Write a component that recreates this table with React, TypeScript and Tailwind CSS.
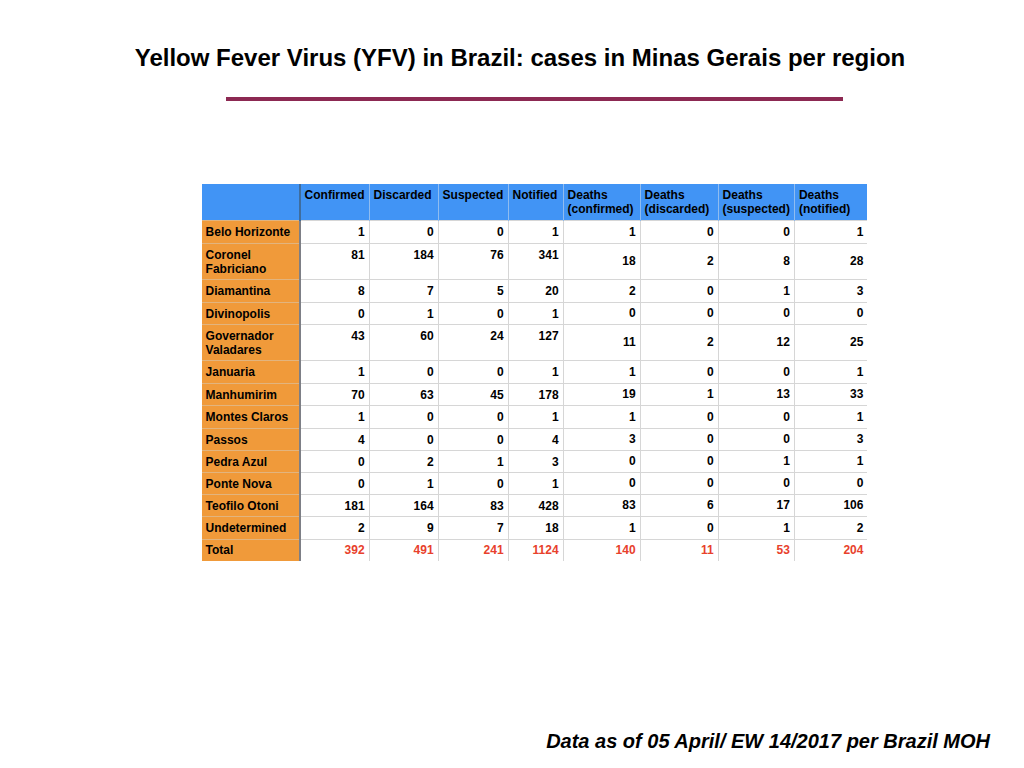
const headers = [
  ['Confirmed'],
  ['Discarded'],
  ['Suspected'],
  ['Notified'],
  ['Deaths', '(confirmed)'],
  ['Deaths', '(discarded)'],
  ['Deaths', '(suspected)'],
  ['Deaths', '(notified)'],
];

const colWidths = [98, 69, 69, 70, 55, 77, 78, 76, 73];

interface Row {
  name: string[];
  values: number[];
  h: string;
}

const rows: Row[] = [
  { name: ['Belo Horizonte'], values: [1, 0, 0, 1, 1, 0, 0, 1], h: 'h-[23px]' },
  { name: ['Coronel', 'Fabriciano'], values: [81, 184, 76, 341, 18, 2, 8, 28], h: 'h-[36px]' },
  { name: ['Diamantina'], values: [8, 7, 5, 20, 2, 0, 1, 3], h: 'h-[23px]' },
  { name: ['Divinopolis'], values: [0, 1, 0, 1, 0, 0, 0, 0], h: 'h-[22px]' },
  { name: ['Governador', 'Valadares'], values: [43, 60, 24, 127, 11, 2, 12, 25], h: 'h-[36px]' },
  { name: ['Januaria'], values: [1, 0, 0, 1, 1, 0, 0, 1], h: 'h-[23px]' },
  { name: ['Manhumirim'], values: [70, 63, 45, 178, 19, 1, 13, 33], h: 'h-[22px]' },
  { name: ['Montes Claros'], values: [1, 0, 0, 1, 1, 0, 0, 1], h: 'h-[23px]' },
  { name: ['Passos'], values: [4, 0, 0, 4, 3, 0, 0, 3], h: 'h-[22px]' },
  { name: ['Pedra Azul'], values: [0, 2, 1, 3, 0, 0, 1, 1], h: 'h-[22px]' },
  { name: ['Ponte Nova'], values: [0, 1, 0, 1, 0, 0, 0, 0], h: 'h-[22px]' },
  { name: ['Teofilo Otoni'], values: [181, 164, 83, 428, 83, 6, 17, 106], h: 'h-[22px]' },
  { name: ['Undetermined'], values: [2, 9, 7, 18, 1, 0, 1, 2], h: 'h-[23px]' },
];

const totals = [392, 491, 241, 1124, 140, 11, 53, 204];

export default function App() {
  return (
    <div
      className="w-[1024px] h-[768px] bg-white flex flex-col items-center text-black"
      style={{ fontFamily: '"Liberation Sans", Arial, sans-serif' }}
    >
      <h1 className="mt-[44px] text-[24px] leading-[28px] font-bold text-center w-full pl-[16px]">
        Yellow Fever Virus (YFV) in Brazil: cases in Minas Gerais per region
      </h1>
      <div className="mt-[25px] w-[617px] h-[4px] bg-[#8c2952] ml-[45px]" />

      <table className="mt-[83px] table-fixed border-collapse text-[12px] leading-[14px] font-bold ml-[45px]">
        <colgroup>
          {colWidths.map((w, i) => (
            <col key={i} style={{ width: w }} />
          ))}
        </colgroup>
        <thead>
          <tr className="h-[36px] bg-[#4194f5]">
            <th className="border-r-2 border-[#3f6d9e]" />
            {headers.map((h, i) => (
              <th
                key={i}
                className="align-top text-left font-bold px-[4px] pt-[4px] border-l border-[#8fbcf0] first:border-l-0"
              >
                {h.map((line, j) => (
                  <div key={j} className="whitespace-nowrap">{line}</div>
                ))}
              </th>
            ))}
          </tr>
        </thead>
        <tbody>
          {rows.map((r) => (
            <tr key={r.name.join(' ')} className={`${r.h} border-t border-[#d6d6d6]`}>
              <td className="bg-[#f09a3a] border-r-2 border-[#7d7f86] border-t border-t-[#e2b47e] align-top px-[4px] pt-[4px]">
                {r.name.map((n, j) => (
                  <div key={j} className="whitespace-nowrap">{n}</div>
                ))}
              </td>
              {r.values.map((v, i) => (
                <td
                  key={i}
                  className={`text-right px-[4px] border-l border-[#d6d6d6] ${
                    i < 4 ? 'align-top pt-[4px]' : 'align-middle'
                  }`}
                >
                  {v}
                </td>
              ))}
            </tr>
          ))}
          <tr className="h-[22px] border-t border-[#d6d6d6]">
            <td className="bg-[#f09a3a] border-r-2 border-[#7d7f86] border-t border-t-[#e2b47e] align-top px-[4px] pt-[3px]">
              Total
            </td>
            {totals.map((v, i) => (
              <td
                key={i}
                className="text-right px-[4px] border-l border-[#d6d6d6] text-[#e8412c] align-middle"
              >
                {v}
              </td>
            ))}
          </tr>
        </tbody>
      </table>

      <div className="mt-auto mb-[15px] w-full flex justify-end pr-[34px]">
        <p className="text-[20px] leading-[23px] font-bold italic">
          Data as of 05 April/ EW 14/2017 per Brazil MOH
        </p>
      </div>
    </div>
  );
}
